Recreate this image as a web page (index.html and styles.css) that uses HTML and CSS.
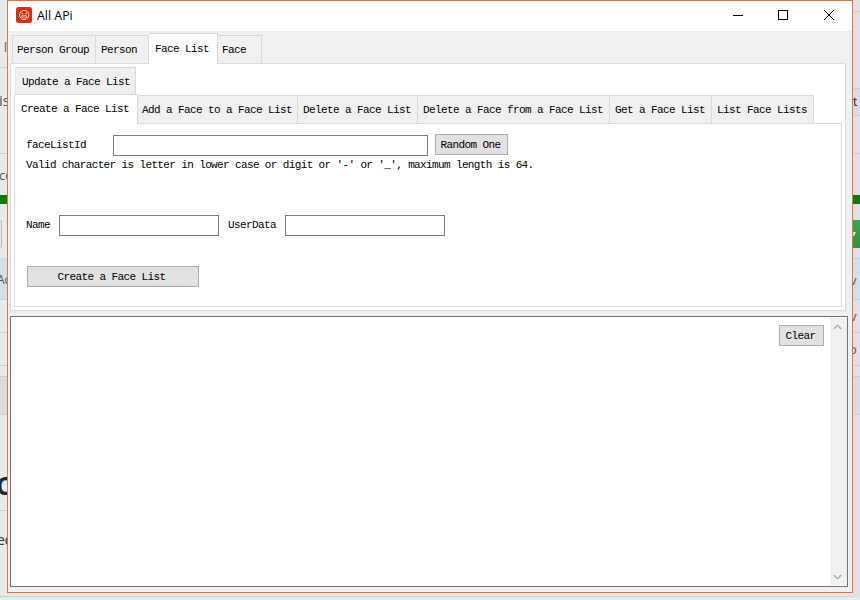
FILE: index.html
```html
<!DOCTYPE html>
<html lang="en">
<head>
<meta charset="utf-8">
<title>All APi</title>
<link rel="stylesheet" href="styles.css">
</head>
<body>
<div class="desktop">
  <div class="strip left">
    <div class="row h68"><span class="txt bar">l</span></div>
    <div class="row h86"><span class="txt is">is</span></div>
    <div class="row plain h41"><span class="txt co">co</span></div>
    <div class="green"></div>
    <div class="row plain h54"><i class="edge"></i></div>
    <div class="row blue h42"><span class="txt ac">Ac</span></div>
    <div class="row h33"></div>
    <div class="row h33"></div>
    <div class="row h11"></div>
    <div class="row grey h38"></div>
    <div class="row h96"><span class="txt big">C</span></div>
    <div class="row h86"><span class="txt ed">ed</span></div>
  </div>

  <div class="window">
    <header class="titlebar">
      <svg class="logo" width="16" height="16" viewBox="0 0 16 16">
        <rect width="16" height="16" rx="2.5" fill="#dd2c14"/>
        <g fill="none" stroke="#ffd9d0" stroke-width="1">
          <circle cx="8.2" cy="8" r="4.6"/>
          <path d="M5.7 8.8h5c0 3-5 3-5 0zM5.4 6.6h1.8M9.2 6.6H11"/>
        </g>
      </svg>
      <span class="title">All APi</span>
      <svg class="controls" width="104" height="12" viewBox="0 0 104 12" fill="none" stroke="#000">
        <path d="M1 6.5h10"/>
        <rect x="46.5" y="1.5" width="9" height="9"/>
        <path d="M92 1l10 10M102 1L92 11"/>
      </svg>
    </header>

    <nav class="tabs outer-tabs">
      <span class="tab w-group">Person Group</span>
      <span class="tab w-person">Person</span>
      <span class="tab active w-list">Face List</span>
      <span class="tab w-face">Face</span>
    </nav>

    <main class="outer-panel">
      <div class="tabs upper"><span class="tab">Update a Face List</span></div>
      <nav class="tabs inner-tabs">
        <span class="tab active w-create">Create a Face List</span>
        <span class="tab w-add">Add a Face to a Face List</span>
        <span class="tab w-del">Delete a Face List</span>
        <span class="tab w-delface">Delete a Face from a Face List</span>
        <span class="tab w-get">Get a Face List</span>
        <span class="tab w-lists">List Face Lists</span>
      </nav>
      <section class="form">
        <div class="line">
          <label class="id-label">faceListId</label><span class="input id-input"></span><span class="button random">Random One</span>
        </div>
        <p class="hint">Valid character is letter in lower case or digit or '-' or '_', maximum length is 64.</p>
        <div class="line names">
          <label class="name-label">Name</label><span class="input"></span><label class="data-label">UserData</label><span class="input"></span>
        </div>
        <span class="button create">Create a Face List</span>
      </section>
    </main>

    <section class="output">
      <span class="button clear">Clear</span>
      <div class="scrollbar">
        <svg width="9" height="6" viewBox="0 0 9 6"><path d="M.8 5l3.7-3.7L8.2 5" fill="none" stroke="#b2b2b2" stroke-width="1.6"/></svg>
        <svg width="9" height="6" viewBox="0 0 9 6"><path d="M.8 1l3.7 3.7L8.2 1" fill="none" stroke="#b2b2b2" stroke-width="1.6"/></svg>
      </div>
    </section>
  </div>

  <div class="strip right">
    <div class="row h12"></div>
    <div class="row plain h56"></div>
    <div class="row h21"></div>
    <div class="row grey h27"><span class="txt tee">t</span></div>
    <div class="row h38"></div>
    <div class="row plain h41"></div>
    <div class="green"></div>
    <div class="row plain h16"></div>
    <div class="go"><svg width="4" height="4" viewBox="0 0 4 4"><path d="M0 0h3L1 4H0z" fill="#d8efdc"/></svg></div>
    <div class="row h11"></div>
    <div class="row blue h41"><span class="txt vee">v</span></div>
    <div class="row h33"><span class="txt vee2">v</span></div>
    <div class="row h33"><span class="txt oh">o</span></div>
    <div class="row h11"></div>
    <div class="row grey h38"></div>
    <div class="row plain h182"></div>
  </div>
</div>
</body>
</html>
```
FILE: styles.css
```css
* { box-sizing: border-box; }
body { margin: 0; overflow: hidden; background: #e6eaeb; }
.desktop {
  display: flex;
  width: 860px;
  height: 600px;
  background: linear-gradient(#e3e4e5, #e3e4e5 596px, #bcd2d4 596px, #e9eced 598px);
}

/* slivers of the page behind the window */
.strip { width: 7px; height: 597px; overflow: hidden; background: #e6ebed; font-family: "Open Sans", sans-serif; color: #555; }
.right { background: #e3e0e4; }
.row { display: flex; overflow: hidden; border-bottom: 1px solid #cbd0d3; }
.plain { border-bottom: 0; }
.blue { background: #d5deea; }
.grey { background: #dadce0; }
.green { height: 9px; background: #087d08; }
.go { display: flex; align-items: center; height: 28px; background: linear-gradient(#38a850, #289541); }
.edge { width: 2px; height: 28px; margin-top: 16px; border: 1px solid #b8bbbc; border-left: 0; border-radius: 0 3px 3px 0; }
.txt { font-size: 12px; line-height: 16px; }
.bar { margin: 40px 0 0 4px; }
.is { font-size: 15px; margin: 24px 0 0 -1px; }
.co { margin: 13px 0 0 -1px; font-size: 13px; }
.ac { margin: 14px 0 0 -3px; font-size: 12px; }
.big { margin: 62px 0 0 -4px; font-size: 25px; font-weight: 700; color: #1e252b; }
.ed { margin: 21px 0 0 -3px; font-size: 14px; color: #333; }
.tee { margin-top: 5px; color: #222; }
.vee { margin: 13px 0 0 -3px; font-size: 13px; }
.vee2 { margin: 8px 0 0 -3px; font-size: 13px; }
.oh { margin: 8px 0 0 -4px; font-size: 13px; }
.h11 { height: 11px; } .h12 { height: 12px; } .h16 { height: 16px; }
.h21 { height: 21px; } .h27 { height: 27px; } .h33 { height: 33px; }
.h38 { height: 38px; } .h41 { height: 41px; } .h42 { height: 42px; }
.h54 { height: 54px; } .h56 { height: 56px; } .h68 { height: 68px; }
.h86 { height: 86px; } .h96 { height: 96px; } .h182 { height: 182px; }

.window {
  width: 846px;
  height: 593px;
  border: 1px solid #d8794a;
  background: #f0f0f0;
  font-family: "Liberation Mono", monospace;
  font-size: 11px;
  line-height: 14px;
  letter-spacing: -0.6px;
  white-space: nowrap;
  color: #000;
}
.titlebar { display: flex; align-items: center; height: 30px; padding: 0 16px 2px 8px; background: #fff; }
.title { margin: 2px 0 0 5px; font: 12.4px/16px "Open Sans", sans-serif; letter-spacing: 0; }
.controls { margin-left: auto; }

.tabs { display: flex; align-items: flex-end; }
.tab { height: 28px; padding: 7px 0 0 4px; border: 1px solid #d9d9d9; border-bottom: 0; border-left: 0; background: #f0f0f0; }
.tab.active { height: 30px; padding: 7px 0 0 6px; background: #fff; }
.outer-tabs { height: 32px; padding-left: 4px; }
.outer-tabs .tab:first-child { border-left: 1px solid #d9d9d9; }
.w-group { width: 84px; }
.outer-tabs .w-person { width: 53px; padding-left: 5px; }
.w-list { width: 69px; position: relative; margin-bottom: -1px; }
.outer-tabs .active { height: 31px; padding-top: 8px; }
.w-face { width: 44px; }

.outer-panel { width: 836px; height: 248px; margin-left: 2px; padding: 3px 3px 0; border: 1px solid #dcdcdc; background: #fff; }
.upper .tab { width: 121px; height: 27px; margin-left: 1px; padding: 7px 0 0 6px; border-left: 1px solid #e4e4e4; }
.inner-tabs { height: 29px; }
.w-create { width: 124px; position: relative; margin-bottom: -1px; }
.inner-tabs .w-create { border-left: 1px solid #d9d9d9; }
.w-add { width: 160px; }
.w-del { width: 120px; }
.w-delface { width: 192px; }
.w-get { width: 102px; }
.w-lists { width: 102px; }
.inner-tabs .w-del, .inner-tabs .w-delface, .inner-tabs .w-get, .inner-tabs .w-lists { padding-left: 5px; }

.form { width: 828px; height: 184px; padding: 10px 0 0 11px; border: 1px solid #dcdcdc; }
.line { display: flex; align-items: center; height: 22px; }
.input { width: 160px; height: 21px; border: 1px solid #7a7a7a; background: #fff; }
.id-label { width: 87px; }
.id-input { width: 315px; }
.button { display: block; height: 21px; padding-top: 3px; border: 1px solid #adadad; background: #e1e1e1; text-align: center; }
.random { width: 73px; margin: 0 0 1px 7px; padding-right: 2px; }
.hint { height: 14px; margin: 2px 0 0; letter-spacing: -0.63px; }
.names { margin-top: 42px; }
.name-label { width: 33px; }
.data-label { width: 57px; margin-left: 9px; }
.create { width: 172px; margin: 30px 0 0 1px; padding-right: 3px; }

.output { display: flex; width: 838px; height: 271px; margin: 5px 0 0 2px; border: 1px solid #737373; background: #fff; }
.clear { width: 45px; height: 21px; margin: 8px 6px 0 auto; padding-right: 2px; }
.scrollbar { display: flex; flex-direction: column; align-items: center; justify-content: space-between; width: 17px; margin: 1px 0; padding: 6px 2px 5px 0; background: #f0f0f0; }
```
